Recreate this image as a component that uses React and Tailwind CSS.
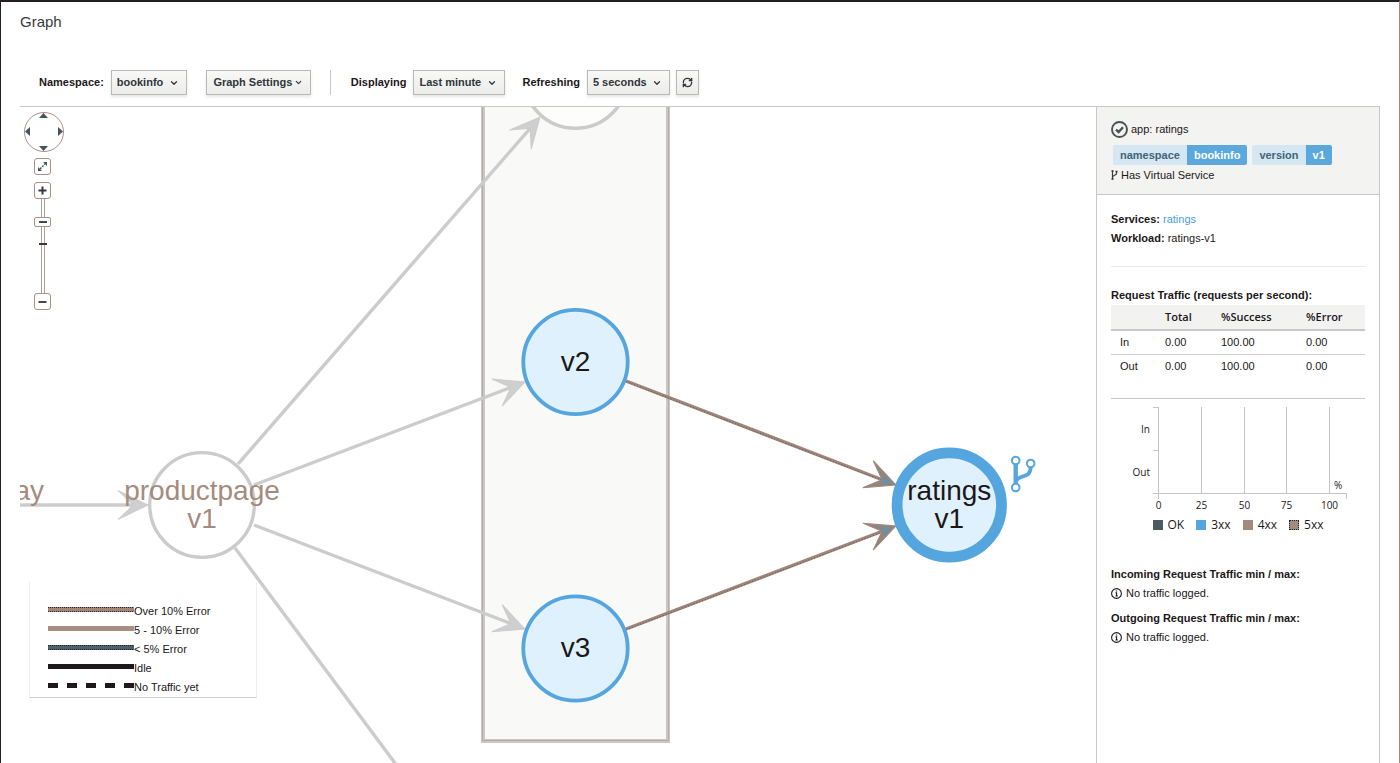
import React from "react";
import { ChevronDown, RefreshCw } from "lucide-react";

const SANS = "font-['Liberation_Sans',Arial,sans-serif]";
const OPEN = "font-['Open_Sans','Noto_Sans',sans-serif]";
const CONTROL =
  "h-[25px] border border-[#bcb8b6] bg-gradient-to-b from-[#f8f8f7] to-[#ececeb] text-[11px] font-bold text-[#30363a] shadow-[0_2px_3px_rgba(0,0,0,0.1)]";

function Picker({ id, label, options, width }) {
  return (
    <div className="flex items-center gap-[7px]">
      <label htmlFor={id} className="font-bold">
        {label}
      </label>
      <span className={`relative flex items-center ${width}`}>
        <select id={id} className={`w-full appearance-none pr-4 pl-[5px] ${CONTROL}`}>
          {options.map((o) => (
            <option key={o}>{o}</option>
          ))}
        </select>
        <ChevronDown
          className="pointer-events-none absolute right-2 size-[10px]"
          strokeWidth={3}
          color="#30363a"
        />
      </span>
    </div>
  );
}

function Toolbar() {
  return (
    <div className="mt-[38px] flex items-center border-b border-[#c8c8c8] pb-[11px] pl-[19px]">
      <Picker id="namespace" label="Namespace:" options={["bookinfo", "default"]} width="w-[76px]" />
      <button
        type="button"
        className={`ml-[19px] flex w-[105px] items-center justify-center gap-[2px] ${CONTROL}`}
      >
        Graph Settings
        <ChevronDown className="size-[9px]" strokeWidth={3} />
      </button>
      <span className="mr-[20px] ml-[19px] h-[25px] border-l border-[#c8c8c8]" />
      <Picker id="duration" label="Displaying" options={["Last minute", "Last hour"]} width="w-[92px]" />
      <span className="w-[17px]" />
      <Picker id="refresh" label="Refreshing" options={["5 seconds", "Pause"]} width="w-[83px]" />
      <button
        type="button"
        aria-label="Refresh"
        className={`ml-[6px] flex w-[23px] items-center justify-center ${CONTROL}`}
      >
        <RefreshCw className="size-[11px]" strokeWidth={3} />
      </button>
    </div>
  );
}

function Edge({ from, to, active }) {
  const [x1, y1] = from;
  const [x2, y2] = to;
  const len = Math.hypot(x2 - x1, y2 - y1);
  const angle = (Math.atan2(y2 - y1, x2 - x1) * 180) / Math.PI;
  return (
    <g transform={`translate(${x2} ${y2}) rotate(${angle})`}>
      <path d={`M${-len} 0H-14`} stroke={active ? "#a18677" : "#cccccc"} strokeWidth="3.4" />
      {active && (
        <path d={`M${-len} 0.6H-14`} stroke="#55616a" strokeWidth="1" strokeDasharray="1 2" />
      )}
      <path
        d="M0 0L-30 14.500L-15 0L-30 -14.500Z"
        fill={active ? "#918580" : "#cfcfcf"}
        stroke={active ? "#a18677" : "#cccccc"}
        strokeWidth="1"
      />
      {active && <path d="M-3 0L-17 5L-13 0L-17 -5Z" fill="#6f8ea3" />}
    </g>
  );
}

function GraphNode({ x, y, r, ring, active, lines, top }) {
  return (
    <g>
      <circle
        cx={x}
        cy={y}
        r={r}
        fill={active ? "#dff1fd" : "#ffffff"}
        fillOpacity={active ? 1 : 0.6}
        stroke={active ? "#55a6df" : "#cbcbcb"}
        strokeWidth={ring}
      />
      {lines.map((t, i) => (
        <text
          key={t}
          x={x}
          y={top + i * 28}
          textAnchor="middle"
          fontSize="28"
          fontFamily="'Liberation Sans', Arial, sans-serif"
          fill={active ? "#1c1719" : "#a58b7e"}
        >
          {t}
        </text>
      ))}
    </g>
  );
}

function Diagram() {
  return (
    <svg
      className="absolute top-0 left-0 h-[656px] w-[1180px]"
      viewBox="20 107 1180 656"
      role="img"
      aria-label="Service graph"
    >
      <rect x="483" y="60" width="185" height="681" fill="#f9f9f8" stroke="#cac8c7" strokeWidth="4" />
      <rect
        x="482.500"
        y="60.500"
        width="186"
        height="680"
        fill="none"
        stroke="#a58f85"
        strokeWidth="1"
        strokeDasharray="1 1"
      />
      <GraphNode x={575.5} y={76} r={52.3} ring={3.5} lines={[]} top={0} />
      <GraphNode x={202} y={505} r={52.3} ring={3.3} lines={[]} top={0} />
      <Edge from={[0, 505]} to={[148, 505]} />
      <Edge from={[238, 464]} to={[540, 117]} />
      <Edge from={[254, 485]} to={[525, 382]} />
      <Edge from={[254, 525]} to={[525, 629]} />
      <Edge from={[235, 548]} to={[540, 958]} />
      <Edge from={[626, 381]} to={[896, 485]} active />
      <Edge from={[626, 629]} to={[896, 526]} active />
      <GraphNode x={575.5} y={362} r={52.2} ring={3.8} active lines={["v2"]} top={371} />
      <GraphNode x={575.5} y={648.5} r={52.2} ring={3.8} active lines={["v3"]} top={657} />
      <GraphNode x={949.3} y={505} r={52.2} ring={10.8} active lines={["ratings", "v1"]} top={500} />
      <g
        fontSize="28"
        fontFamily="'Liberation Sans', Arial, sans-serif"
        fill="#a58b7e"
        textAnchor="middle"
      >
        <text x="202" y="500">productpage</text>
        <text x="202" y="528">v1</text>
        <text x="44" y="500" textAnchor="end">ay</text>
      </g>
      <g fill="none" stroke="#55a6df">
        <path d="M1015.700 464V484" strokeWidth="4.400" />
        <path d="M1030.700 467C1030.500 475 1026 475.500 1021 477C1018 478 1016.500 479.500 1016 482" strokeWidth="3.800" />
        <g fill="#ffffff" strokeWidth="2">
          <circle cx="1015.700" cy="460.500" r="3.800" />
          <circle cx="1030.700" cy="463.500" r="3.800" />
          <circle cx="1015.700" cy="487.500" r="3.800" />
        </g>
      </g>
    </svg>
  );
}

const ZOOM_BUTTON =
  "ml-[10px] flex size-[17px] items-center justify-center rounded-[3px] border border-[#a98f84] bg-white";

function ZoomControls() {
  return (
    <div className="absolute top-[5px] left-1 flex w-10 flex-col items-start">
      <div className="grid size-10 grid-cols-3 grid-rows-3 rounded-full border border-[#a98f84] bg-white">
        <button type="button" aria-label="Pan up" className="col-start-2 row-start-1 flex items-start justify-center">
          <svg className="h-[5px] w-[9px]" viewBox="0 0 9 5"><path d="M4.500 0L9 5H0Z" fill="#45555d" /></svg>
        </button>
        <button type="button" aria-label="Pan left" className="col-start-1 row-start-2 flex items-center justify-start">
          <svg className="h-[9px] w-[5px]" viewBox="0 0 5 9"><path d="M0 4.500L5 0V9Z" fill="#45555d" /></svg>
        </button>
        <button type="button" aria-label="Pan right" className="col-start-3 row-start-2 flex items-center justify-end">
          <svg className="h-[9px] w-[5px]" viewBox="0 0 5 9"><path d="M5 4.500L0 0V9Z" fill="#45555d" /></svg>
        </button>
        <button type="button" aria-label="Pan down" className="col-start-2 row-start-3 flex items-end justify-center">
          <svg className="h-[5px] w-[9px]" viewBox="0 0 9 5"><path d="M4.500 5L9 0H0Z" fill="#45555d" /></svg>
        </button>
      </div>
      <button type="button" aria-label="Fit to screen" className={`mt-[6px] ${ZOOM_BUTTON}`}>
        <svg className="size-[11px]" viewBox="0 0 11 11" fill="#45555d">
          <path d="M3 8L8 3" stroke="#45555d" strokeWidth="1.400" strokeDasharray="2 1" />
          <path d="M6 1H10V5Z" />
          <path d="M1 6V10H5Z" />
        </svg>
      </button>
      <button type="button" aria-label="Zoom in" className={`mt-[7px] ${ZOOM_BUTTON}`}>
        <svg className="size-[9px]" viewBox="0 0 9 9"><path d="M4.500 0.500V8.500M0.500 4.500H8.500" stroke="#33393c" strokeWidth="2" /></svg>
      </button>
      <div className="relative ml-[10px] flex">
        <input
          type="range"
          aria-label="Zoom level"
          min="0"
          max="100"
          defaultValue="78"
          className="h-[94px] w-[17px] appearance-none bg-transparent bg-[linear-gradient(to_right,transparent_7px,#b3a199_7px,#b3a199_8px,#ffffff_8px,#ffffff_10px,#b3a199_10px,#b3a199_11px,transparent_11px)] [direction:rtl] [writing-mode:vertical-lr] [&::-webkit-slider-thumb]:h-[10px] [&::-webkit-slider-thumb]:w-[17px] [&::-webkit-slider-thumb]:appearance-none [&::-webkit-slider-thumb]:rounded-[2px] [&::-webkit-slider-thumb]:border [&::-webkit-slider-thumb]:border-[#a98f84] [&::-webkit-slider-thumb]:bg-white [&::-webkit-slider-thumb]:bg-[linear-gradient(#45494b,#45494b)] [&::-webkit-slider-thumb]:bg-[length:8px_2px] [&::-webkit-slider-thumb]:bg-center [&::-webkit-slider-thumb]:bg-no-repeat"
        />
        <span className="absolute top-11 left-[5px] h-[2px] w-2 bg-[#33393c]" />
      </div>
      <button type="button" aria-label="Zoom out" className={ZOOM_BUTTON}>
        <svg className="size-[9px]" viewBox="0 0 9 9"><path d="M0.500 5H8.500" stroke="#45494b" strokeWidth="2" /></svg>
      </button>
    </div>
  );
}

const LEGEND = [
  { label: "Over 10% Error", color: "#a18677", dots: "#2b2224" },
  { label: "5 - 10% Error", color: "#a98e82" },
  { label: "< 5% Error", color: "#4b6069", dots: "#231f20" },
  { label: "Idle", color: "#1e191b" },
  { label: "No Traffic yet", color: "#1e191b", dash: "10 9" },
];

function Legend() {
  return (
    <ul className="absolute bottom-[65px] left-[9px] w-[228px] border-x border-b border-x-[#eeeeee] border-b-[#d2d2d2] bg-white pt-5 pl-[18px]">
      {LEGEND.map((l) => (
        <li key={l.label} className="flex h-[19px] items-center">
          <svg className="h-[10px] w-[86px]" viewBox="0 0 86 10">
            <path d="M0 2.500H86" stroke={l.color} strokeWidth="5" strokeDasharray={l.dash} />
            {l.dots && (
              <path d="M0 0.500H86M0 4.500H86" stroke={l.dots} strokeWidth="1" strokeDasharray="1 1" />
            )}
          </svg>
          <span>{l.label}</span>
        </li>
      ))}
    </ul>
  );
}

function Badge({ name, value }) {
  return (
    <span className="flex h-5 items-center overflow-hidden rounded-[2px] leading-5 font-bold">
      <span className="bg-[#d5e7f2] px-[7px] text-[#3f6478]">{name}</span>
      <span className="bg-[#5aa8de] px-[7px] text-white">{value}</span>
    </span>
  );
}

const TICKS = [
  { value: 0, x: 1158.5 },
  { value: 25, x: 1201.5 },
  { value: 50, x: 1244.5 },
  { value: 75, x: 1286.5 },
  { value: 100, x: 1329.5 },
];

function TrafficChart() {
  return (
    <svg className="h-[112px] w-full" viewBox="1111 401 254 112" fill="none" aria-label="Request status chart" role="img">
      <g stroke="#c4c4c4" strokeWidth="1">
        {TICKS.map((t) => (
          <path key={t.value} d={`M${t.x} 407V493`} />
        ))}
        <path d="M1153 407.500H1158.500M1153 450.500H1158.500M1153 493.500H1346.500V499M1158.500 493V499" />
      </g>
      <g fill="#1c1719" fontSize="10" fontFamily="'Open Sans', 'Noto Sans', sans-serif">
        {TICKS.map((t) => (
          <text key={t.value} x={t.x} y="509" textAnchor="middle">
            {t.value}
          </text>
        ))}
        <text x="1150" y="433" textAnchor="end">In</text>
        <text x="1150" y="476" textAnchor="end">Out</text>
        <text x="1334" y="489">%</text>
      </g>
    </svg>
  );
}

function NoTraffic() {
  return (
    <p className="flex items-center gap-1 leading-[19px]">
      <svg className="size-[11px]" viewBox="0 0 11 11" fill="none" stroke="#1c1719">
        <circle cx="5.500" cy="5.500" r="4.900" strokeWidth="1.100" />
        <path d="M4.800 3H6.200M4.500 4.900H5.600V7.800M4.400 8H6.800" strokeWidth="1.100" />
      </svg>
      No traffic logged.
    </p>
  );
}

function SidePanel() {
  return (
    <aside className="w-[284px] shrink-0 border-x border-[#c8c8c8] bg-white">
      <div className="border-b border-[#c8c8c8] bg-[#f3f3f1] px-[14px] pt-3 pb-[9px]">
        <div className="flex h-5 items-center gap-[3px]">
          <svg className="size-[17px]" viewBox="0 0 17 17" fill="none" stroke="#4a5256">
            <circle cx="8.500" cy="8.500" r="7.500" strokeWidth="1.900" />
            <path d="M5 8.600L7.600 11L12 6.200" strokeWidth="2.400" />
          </svg>
          <span>app: ratings</span>
        </div>
        <div className="mt-[6px] ml-[2px] flex gap-[5px]">
          <Badge name="namespace" value="bookinfo" />
          <Badge name="version" value="v1" />
        </div>
        <div className="flex h-5 items-center gap-[3px]">
          <svg className="h-[10px] w-[7px]" viewBox="0 0 7 10" fill="none" stroke="#33393c">
            <path d="M1.500 0.500V9.500M5.500 2V3.500C5.500 5.500 1.500 5 1.500 7.500" strokeWidth="1.200" />
            <path d="M0.500 1H2.500M4.500 1.500H6.500M0.500 9H2.500" strokeWidth="1.400" />
          </svg>
          <span>Has Virtual Service</span>
        </div>
      </div>
      <div className="px-[14px] pt-[15px]">
        <p className="leading-[19px]">
          <strong>Services:</strong>{" "}
          <a href="#ratings" className="text-[#4a9fdb]">ratings</a>
        </p>
        <p className="leading-[19px]">
          <strong>Workload:</strong> ratings-v1
        </p>
        <hr className="mt-[18px] border-t border-[#e9e9e9]" />
        <h2 className="mt-[19px] leading-[19px] font-bold">Request Traffic (requests per second):</h2>
        <table className="w-full table-fixed text-left">
          <colgroup>
            <col className="w-[45px]" />
            <col className="w-14" />
            <col className="w-[85px]" />
            <col />
          </colgroup>
          <thead>
            <tr className={`h-[25px] border-b-2 border-[#c8c8c8] bg-[#f2f2f1] ${OPEN}`}>
              <td />
              <th className="pl-[9px] font-semibold">Total</th>
              <th className="pl-[9px] font-semibold">%Success</th>
              <th className="pl-[9px] font-semibold">%Error</th>
            </tr>
          </thead>
          <tbody>
            {["In", "Out"].map((d) => (
              <tr key={d} className="h-6 border-b border-[#cccccc] last:border-b-0">
                <td className="pl-[9px]">{d}</td>
                <td className="pl-[9px]">0.00</td>
                <td className="pl-[9px]">100.00</td>
                <td className="pl-[9px]">0.00</td>
              </tr>
            ))}
          </tbody>
        </table>
        <div className="mt-5 border-t border-[#c8c8c8] pt-[2px]">
          <TrafficChart />
          <ul className={`flex h-6 items-center justify-center gap-3 text-xs ${OPEN}`}>
            <li className="flex items-center gap-[5px]"><i className="size-[10px] bg-[#4b5b62]" />OK</li>
            <li className="flex items-center gap-[5px]"><i className="size-[10px] bg-[#55a6df]" />3xx</li>
            <li className="flex items-center gap-[5px]"><i className="size-[10px] bg-[#a38a7e]" />4xx</li>
            <li className="flex items-center gap-[5px]">
              <i className="size-[10px] border border-dotted border-[#231f20] bg-[#a38a7e]" />5xx
            </li>
          </ul>
        </div>
        <h2 className="mt-7 leading-[19px] font-bold">Incoming Request Traffic min / max:</h2>
        <NoTraffic />
        <h2 className="mt-[6px] leading-[19px] font-bold">Outgoing Request Traffic min / max:</h2>
        <NoTraffic />
      </div>
    </aside>
  );
}

export default function App() {
  return (
    <div
      className={`flex min-h-screen flex-col border-t-2 border-r border-l border-t-[#231f20] border-r-[#a38a7e] border-l-[#231f20] bg-white pr-[19px] pl-[19px] text-[11px] text-[#1c1719] ${SANS}`}
    >
      <h1 className="pt-[10px] text-[15px] leading-5 text-[#363a3d]">Graph</h1>
      <Toolbar />
      <main className="flex flex-1">
        <section className="relative min-w-0 flex-1 overflow-hidden">
          <Diagram />
          <ZoomControls />
          <Legend />
        </section>
        <SidePanel />
      </main>
    </div>
  );
}
